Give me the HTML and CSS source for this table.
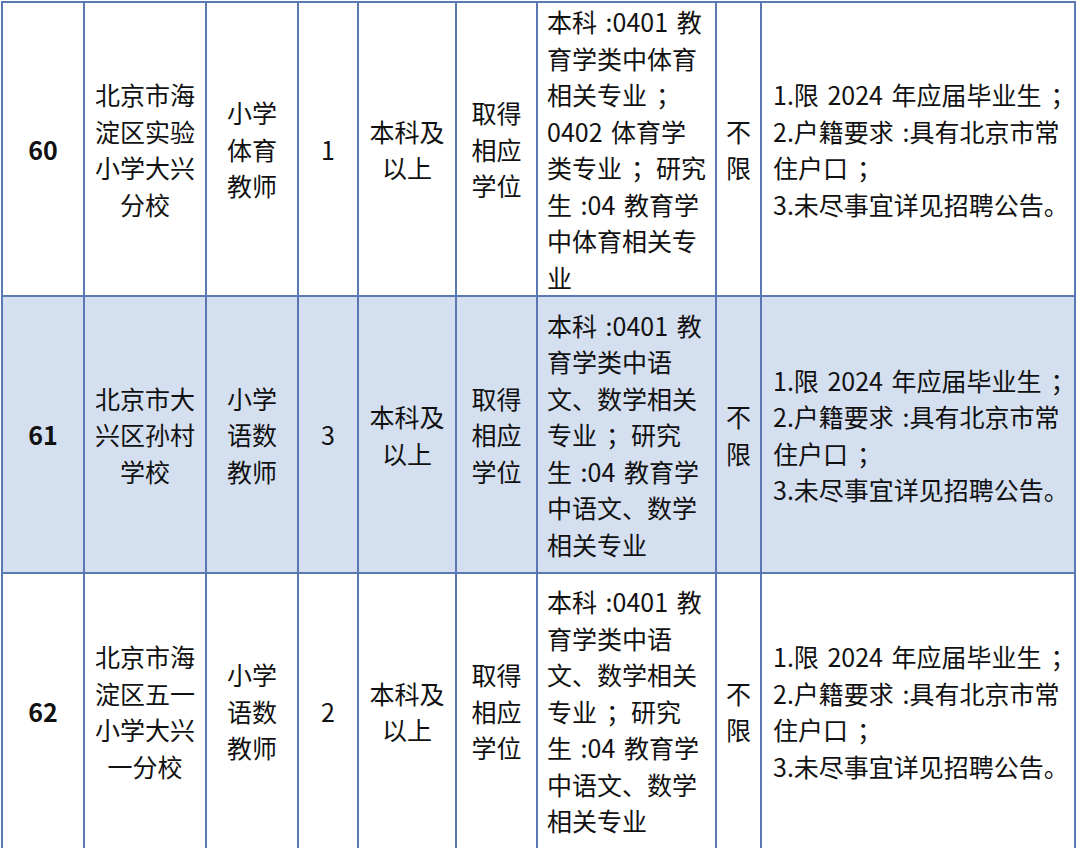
FILE: index.html
```html
<!DOCTYPE html>
<html lang="zh-CN">
<head>
<meta charset="utf-8">
<title>招聘岗位表</title>
<link rel="stylesheet" href="styles.css">
</head>
<body>
<table class="grid">
  <colgroup>
    <col class="c-no"><col class="c-unit"><col class="c-post"><col class="c-num"><col class="c-edu"><col class="c-deg"><col class="c-major"><col class="c-age"><col class="c-note">
  </colgroup>
  <tr class="r1">
    <td class="no">60</td>
    <td>北京市海<br>淀区实验<br>小学大兴<br>分校</td>
    <td>小学<br>体育<br>教师</td>
    <td>1</td>
    <td>本科及<br>以上</td>
    <td>取得<br>相应<br>学位</td>
    <td class="left">本科 :0401 教<br>育学类中体育<br>相关专业<span class="p">；</span><br>0402 体育学<br>类专业<span class="pm">；</span>研究<br>生 :04 教育学<br>中体育相关专<br>业</td>
    <td>不<br>限</td>
    <td class="left note">1.限 2024 年应届毕业生<span class="p">；</span><br>2.户籍要求 :具有北京市常<br>住户口<span class="p">；</span><br>3.未尽事宜详见招聘公告。</td>
  </tr>
  <tr class="r2 shade">
    <td class="no">61</td>
    <td>北京市大<br>兴区孙村<br>学校</td>
    <td>小学<br>语数<br>教师</td>
    <td>3</td>
    <td>本科及<br>以上</td>
    <td>取得<br>相应<br>学位</td>
    <td class="left">本科 :0401 教<br>育学类中语<br>文、数学相关<br>专业<span class="pm">；</span>研究<br>生 :04 教育学<br>中语文、数学<br>相关专业</td>
    <td>不<br>限</td>
    <td class="left note">1.限 2024 年应届毕业生<span class="p">；</span><br>2.户籍要求 :具有北京市常<br>住户口<span class="p">；</span><br>3.未尽事宜详见招聘公告。</td>
  </tr>
  <tr class="r3">
    <td class="no">62</td>
    <td>北京市海<br>淀区五一<br>小学大兴<br>一分校</td>
    <td>小学<br>语数<br>教师</td>
    <td>2</td>
    <td>本科及<br>以上</td>
    <td>取得<br>相应<br>学位</td>
    <td class="left">本科 :0401 教<br>育学类中语<br>文、数学相关<br>专业<span class="pm">；</span>研究<br>生 :04 教育学<br>中语文、数学<br>相关专业</td>
    <td>不<br>限</td>
    <td class="left note">1.限 2024 年应届毕业生<span class="p">；</span><br>2.户籍要求 :具有北京市常<br>住户口<span class="p">；</span><br>3.未尽事宜详见招聘公告。</td>
  </tr>
</table>
</body>
</html>
```
FILE: styles.css
```css
html, body {
  margin: 0;
  padding: 0;
  background: #ffffff;
}
body {
  padding: 1px 0 0 0;
  font-family: "Noto Sans CJK SC", "Noto Sans", sans-serif;
  color: #111111;
}
.grid {
  border-collapse: collapse;
  table-layout: fixed;
  width: 1073px;
  margin-left: 1px;
  font-size: 25px;
  line-height: 36.5px;
  word-spacing: 3px;
}
.grid td {
  border: 2px solid #5a79b2;
  padding: 0 2px;
  text-align: center;
  vertical-align: middle;
  white-space: nowrap;
  overflow: hidden;
}
.grid td.left {
  text-align: left;
  padding-left: 9px;
}
.grid td.note {
  padding-left: 11px;
}
.grid td.no {
  font-weight: 700;
}
/* full-width semicolon drawn centred in its box, as in the source */
.p {
  padding-left: 9px;
  margin-right: -9px;
}
.pm {
  padding-left: 9px;
}
.c-no { width: 82px; }
.c-unit { width: 122px; }
.c-post { width: 92px; }
.c-num { width: 60px; }
.c-edu { width: 98px; }
.c-deg { width: 81px; }
.c-major { width: 179px; }
.c-age { width: 45px; }
.c-note { width: 314px; }
.r1 { height: 292px; }
.r2 { height: 277px; }
.r3 { height: 276px; }
.shade td { background: #d4dff0; }
```
